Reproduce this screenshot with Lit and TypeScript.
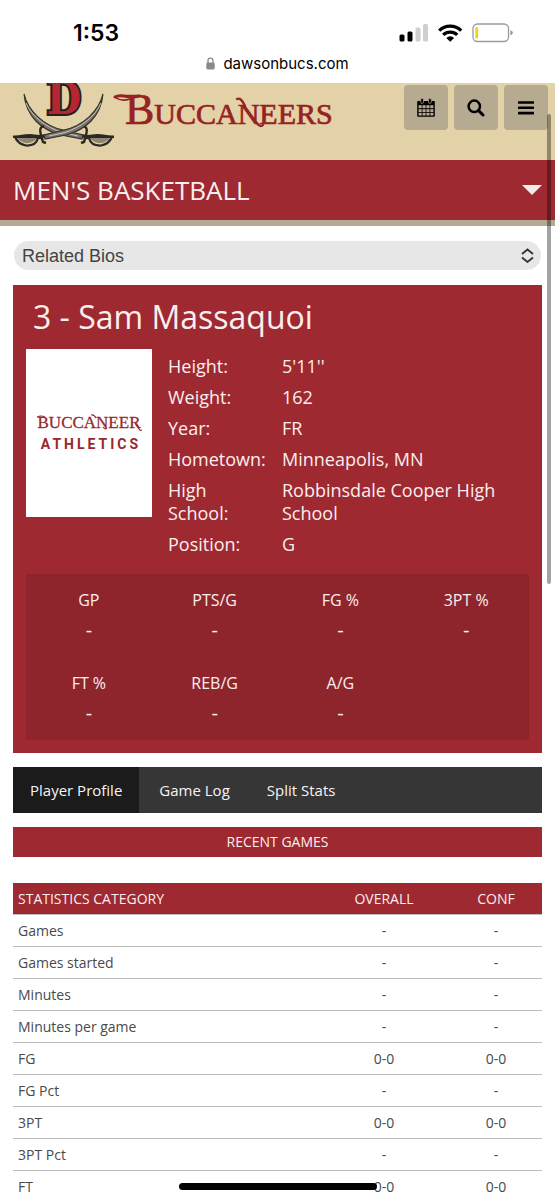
import { LitElement, html, css, svg } from "lit";
import { customElement } from "lit/decorators.js";

const BIO: [string, string][] = [
  ["Height:", "5'11''"],
  ["Weight:", "162"],
  ["Year:", "FR"],
  ["Hometown:", "Minneapolis, MN"],
  ["High School:", "Robbinsdale Cooper High School"],
  ["Position:", "G"],
];

const SUMMARY: [string, string][] = [
  ["GP", "-"],
  ["PTS/G", "-"],
  ["FG %", "-"],
  ["3PT %", "-"],
  ["FT %", "-"],
  ["REB/G", "-"],
  ["A/G", "-"],
];

const STATS: [string, string, string][] = [
  ["Games", "-", "-"],
  ["Games started", "-", "-"],
  ["Minutes", "-", "-"],
  ["Minutes per game", "-", "-"],
  ["FG", "0-0", "0-0"],
  ["FG Pct", "-", "-"],
  ["3PT", "0-0", "0-0"],
  ["3PT Pct", "-", "-"],
  ["FT", "0-0", "0-0"],
];

@customElement("phone-status")
class PhoneStatus extends LitElement {
  static styles = css`
    :host {
      display: block;
      background: #fff;
      color: #000;
      font-family: Inter, sans-serif;
    }
    .status {
      display: flex;
      justify-content: space-between;
      align-items: center;
      height: 50px;
      padding: 16px 42px 0 73px;
      box-sizing: border-box;
    }
    .time {
      font-size: 23px;
      line-height: 32px;
      font-weight: 600;
    }
    .signals {
      display: block;
    }
    .address {
      display: flex;
      justify-content: center;
      align-items: center;
      gap: 8px;
      height: 33px;
      padding-bottom: 6px;
      box-sizing: border-box;
      font-size: 15px;
      line-height: 20px;
    }
  `;
  render() {
    return html`
      <div class="status">
        <span class="time">1:53</span>
        <svg class="signals" width="114" height="20" viewBox="399 23 114 20" aria-label="Signal, Wi-Fi, battery">
          <rect x="399.5" y="34.5" width="5" height="7" rx="1.5" />
          <rect x="407.5" y="31.5" width="5" height="10" rx="1.5" />
          <rect x="415.5" y="27.5" width="5" height="14" rx="1.5" fill="#cfcfcf" />
          <rect x="423" y="24" width="5" height="17.5" rx="1.5" fill="#cfcfcf" />
          <g fill="none" stroke="#000" stroke-width="3.3">
            <path d="M439.2 30.6a15.6 15.6 0 0 1 22 0" />
            <path d="M443.2 34.9a10 10 0 0 1 14 0" />
          </g>
          <path d="M446.3 37.9a5.6 5.6 0 0 1 7.8 0l-3.9 3.9z" />
          <rect x="473" y="24" width="35.5" height="17.5" rx="4.5" fill="#fff" stroke="#9a9a9a" stroke-width="1.3" />
          <rect x="475.3" y="27" width="2.8" height="11.5" rx="1.2" fill="#f3d21c" />
          <path d="M510.3 30.3q2.6.8 2.6 2.5t-2.6 2.5z" fill="#9a9a9a" />
        </svg>
      </div>
      <div class="address">
        <svg width="9" height="13" viewBox="0 0 9 13" aria-hidden="true">
          <path d="M2 6V3.6a2.5 2.5 0 0 1 5 0V6" fill="none" stroke="#8a8a8e" stroke-width="1.3" />
          <rect x="0.3" y="5.5" width="8.4" height="7" rx="1.4" fill="#8a8a8e" />
        </svg>
        <span>dawsonbucs.com</span>
      </div>
    `;
  }
}

@customElement("site-banner")
class SiteBanner extends LitElement {
  static styles = css`
    :host {
      display: flex;
      justify-content: space-between;
      height: 77px;
      overflow: hidden;
      background: #e3d1a7;
      padding: 0 7px 0 12px;
    }
    .logo {
      display: block;
      height: 77px;
    }
    .tools {
      display: flex;
      gap: 6px;
      padding-top: 2px;
    }
    .tool {
      display: flex;
      align-items: center;
      justify-content: center;
      width: 44px;
      height: 45px;
      padding: 0;
      border: 0;
      border-radius: 4px;
      background: #b6ab91;
      color: #000;
    }
  `;
  private sword() {
    return svg`
      <path d="M24 11C28 28 44 43 63 47L83 52 82 56 61 52C42 47 26 34 24 11Z" fill="#77736a" stroke="#34302c" stroke-width="1.1" />
      <path d="M26 20C32 34 46 44 62 49.5L78 53" fill="none" stroke="#c9c4b5" stroke-width="1" />
      <path d="M82 51C88 53 92 51 97 51 104 51 108 53 114 52.5V55H96L84 56.5Z" fill="#2b2926" />
      <path d="M83 43q5 1 3.5 7t-2.5 9l-3 1" fill="none" stroke="#2b2926" stroke-width="2.4" />
      <path d="M89 55Q91 63 101 62.5 109 61 112 54" fill="none" stroke="#2b2926" stroke-width="2.2" />
      <path d="M90 55Q94 61 102 60 108 58 110 55Z" fill="#8f8570" />
    `;
  }
  render() {
    return html`
      <svg class="logo" width="326" height="77" viewBox="12 0 326 77" role="img" aria-label="Dawson Buccaneers">
        <g font-family="'DejaVu Serif Condensed', 'DejaVu Serif', serif" font-weight="700" font-size="44" paint-order="stroke">
          <text x="64" y="31" text-anchor="middle" fill="#b5262f" stroke="#25201f" stroke-width="4">D</text>
        </g>
        ${this.sword()}
        <g transform="matrix(-1 0 0 1 127 0)">${this.sword()}</g>
        <text x="125" y="41" font-family="'Liberation Serif', serif" font-size="44" fill="#962224" stroke="#962224" stroke-width=".7">B<tspan font-size="30">UCCANEERS</tspan></text>
        <g fill="none" stroke="#962224" stroke-linecap="round">
          <path d="M115 14q3-2 9-1 8 2 15 0" stroke-width="3" />
          <path d="M115 14q6 5 15 2" stroke-width="1.5" />
          <path d="M237 16q4-2 8 7" stroke-width="2.4" />
          <path d="M256 39q4 6 7 3" stroke-width="2.4" />
        </g>
      </svg>
      <div class="tools">
        <button class="tool" aria-label="Calendar">
          <svg width="18" height="19" viewBox="0 0 18 19">
            <path d="M1 3h16a.8.8 0 0 1 .8.8V18a.8.8 0 0 1-.8.8H1a.8.8 0 0 1-.8-.8V3.8A.8.8 0 0 1 1 3z" />
            <g fill="#b6ab91">
              ${[7.2, 11.2, 15].map((y) => [1.6, 5.5, 9.4, 13.3].map((x) => svg`<rect x=${x} y=${y} width="3.1" height=${y > 14 ? 2.5 : 3} />`))}
            </g>
            <rect x="3.7" y=".6" width="2.8" height="4.8" rx="1.2" stroke="#b6ab91" stroke-width=".7" />
            <rect x="11.5" y=".6" width="2.8" height="4.8" rx="1.2" stroke="#b6ab91" stroke-width=".7" />
          </svg>
        </button>
        <button class="tool" aria-label="Search">
          <svg width="18" height="18" viewBox="0 0 18 18" fill="none" stroke="#000">
            <circle cx="7.3" cy="7.3" r="5.7" stroke-width="2.5" />
            <path d="M11.6 11.6l4.4 4.4" stroke-width="3" stroke-linecap="round" />
          </svg>
        </button>
        <button class="tool" aria-label="Menu">
          <svg width="16" height="14" viewBox="0 0 16 14">
            <rect width="16" height="2.6" rx=".6" y=".2" />
            <rect width="16" height="2.6" rx=".6" y="5.5" />
            <rect width="16" height="2.6" rx=".6" y="10.8" />
          </svg>
        </button>
      </div>
    `;
  }
}

@customElement("player-card")
class PlayerCard extends LitElement {
  static styles = css`
    :host {
      display: block;
      background: #9e2931;
      color: #fbeeee;
      padding: 13px;
    }
    .name {
      margin: 0;
      padding: 0 7px;
      font-size: 32px;
      line-height: 38px;
      font-weight: 400;
    }
    .details {
      display: flex;
      align-items: flex-start;
      gap: 16px;
      padding: 13px 0 12px;
    }
    .photo {
      display: flex;
      flex: 0 0 126px;
      height: 168px;
      background: #fff;
    }
    .bio {
      flex: 1;
      display: grid;
      gap: 8px;
      margin: 0;
      padding: 6px 0;
      font-size: 18px;
      line-height: 23px;
    }
    .row {
      display: grid;
      grid-template-columns: 98px 1fr;
      gap: 16px;
    }
    .row dd,
    .row dt {
      margin: 0;
    }
    .summary {
      display: grid;
      grid-template-columns: repeat(4, 1fr);
      background: #8e252c;
      margin: 0;
      text-align: center;
      font-size: 16px;
      line-height: 30px;
    }
    .cell {
      padding: 11px 0 12px;
    }
    .cell dd {
      margin: 0;
      font-size: 20px;
    }
  `;
  render() {
    return html`
      <h1 class="name">3 - Sam Massaquoi</h1>
      <div class="details">
        <div class="photo">
          <svg width="126" height="168" viewBox="0 0 126 168" role="img" aria-label="Buccaneer Athletics" fill="#98282c">
            <text x="63" y="79" text-anchor="middle" font-family="'Liberation Serif', serif" font-size="17" stroke="#98282c" stroke-width=".3">BUCCANEER</text>
            <path d="M11 68q4-2 8 0M65 66q3-1 5 3M77 78q2 3 4 1M109 74l4 6q1 2 3 1" fill="none" stroke="#98282c" stroke-width="1.2" />
            <text x="65" y="100" text-anchor="middle" font-family="Roboto, sans-serif" font-weight="700" font-size="14" letter-spacing="3">ATHLETICS</text>
          </svg>
        </div>
        <dl class="bio">
          ${BIO.map(([k, v]) => html`<div class="row"><dt>${k}</dt><dd>${v}</dd></div>`)}
        </dl>
      </div>
      <dl class="summary">
        ${SUMMARY.map(([k, v]) => html`<div class="cell"><dt>${k}</dt><dd>${v}</dd></div>`)}
      </dl>
    `;
  }
}

@customElement("stats-table")
class StatsTable extends LitElement {
  static styles = css`
    :host {
      display: block;
    }
    .stats {
      width: 100%;
      border-collapse: collapse;
      table-layout: fixed;
      font-size: 14px;
      line-height: 21px;
      color: #4a4a4a;
    }
    .overall {
      width: 132px;
    }
    .conf {
      width: 92px;
    }
    th,
    td {
      padding: 5px;
      font-weight: 400;
      text-align: center;
    }
    th:first-child {
      text-align: left;
    }
    thead th {
      background: #9e2931;
      color: #fbeeee;
    }
    tr {
      border-bottom: 1px solid #bdbdbd;
    }
  `;
  render() {
    return html`
      <table class="stats">
        <colgroup><col /><col class="overall" /><col class="conf" /></colgroup>
        <thead>
          <tr><th scope="col">STATISTICS CATEGORY</th><th scope="col">OVERALL</th><th scope="col">CONF</th></tr>
        </thead>
        <tbody>
          ${STATS.map(([n, o, c]) => html`<tr><th scope="row">${n}</th><td>${o}</td><td>${c}</td></tr>`)}
        </tbody>
      </table>
    `;
  }
}

@customElement("app-root")
class AppRoot extends LitElement {
  static styles = css`
    :host {
      display: flex;
      flex-direction: column;
      position: relative;
      height: 100vh;
      overflow: hidden;
      background: #fff;
      font-family: "Open Sans", sans-serif;
    }
    .page {
      flex: 1;
      min-height: 0;
      overflow: hidden;
    }
    .sport {
      display: flex;
      align-items: center;
      justify-content: space-between;
      width: 100%;
      height: 66px;
      padding: 0 13px;
      border: 0;
      border-bottom: 6px solid #b5a993;
      background: #9e2931;
      color: #fbeeee;
      font-family: inherit;
      font-size: 26px;
      line-height: 36px;
      text-align: left;
    }
    .content {
      display: flex;
      flex-direction: column;
      padding: 15px 13px 0;
    }
    .picker {
      position: relative;
      display: block;
      margin: 0 1px 15px;
    }
    .picker select {
      appearance: none;
      display: block;
      width: 100%;
      height: 29px;
      padding: 0 30px 0 8px;
      border: 0;
      border-radius: 15px;
      background: #e7e7e7;
      color: #444;
      font-family: "Liberation Sans", sans-serif;
      font-size: 18px;
    }
    .picker svg {
      position: absolute;
      right: 7px;
      top: 7px;
      pointer-events: none;
    }
    .tabs {
      display: flex;
      gap: 3px;
      margin: 14px 0;
      background: #363636;
      font-size: 15px;
      line-height: 46px;
    }
    .tabs a {
      padding: 0 17px;
      color: #f4f4f4;
      text-decoration: none;
    }
    .tabs .current {
      background: #1b1b1b;
    }
    .recent {
      margin: 0 0 26px;
      background: #9e2931;
      color: #fbeeee;
      font-size: 14px;
      line-height: 30px;
      font-weight: 400;
      text-align: center;
    }
    .scrollbar {
      position: absolute;
      right: 4px;
      top: 114px;
      width: 4px;
      height: 470px;
      border-radius: 2px;
      background: rgba(0, 0, 0, 0.36);
    }
    .home {
      position: absolute;
      left: 50%;
      bottom: 10px;
      width: 198px;
      height: 7px;
      margin-left: -99px;
      border-radius: 4px;
      background: #000;
    }
  `;
  render() {
    return html`
      <phone-status></phone-status>
      <div class="page">
        <site-banner></site-banner>
        <button class="sport">
          <span>MEN'S BASKETBALL</span>
          <svg width="20" height="10" viewBox="0 0 20 10" aria-hidden="true"><path d="M0 0h20L10 10z" fill="#f3ecec" /></svg>
        </button>
        <main class="content">
          <div class="picker">
            <select aria-label="Related Bios"><option>Related Bios</option></select>
            <svg width="13" height="15" viewBox="0 0 13 15" fill="none" stroke="#333" stroke-width="1.8" aria-hidden="true">
              <path d="M1 6l5.5-4.5L12 6M1 9.5L6.5 14 12 9.5" />
            </svg>
          </div>
          <player-card></player-card>
          <nav class="tabs">
            <a class="current" href="#profile">Player Profile</a>
            <a href="#log">Game Log</a>
            <a href="#splits">Split Stats</a>
          </nav>
          <h2 class="recent">RECENT GAMES</h2>
          <stats-table></stats-table>
        </main>
      </div>
      <div class="scrollbar"></div>
      <div class="home"></div>
    `;
  }
}
